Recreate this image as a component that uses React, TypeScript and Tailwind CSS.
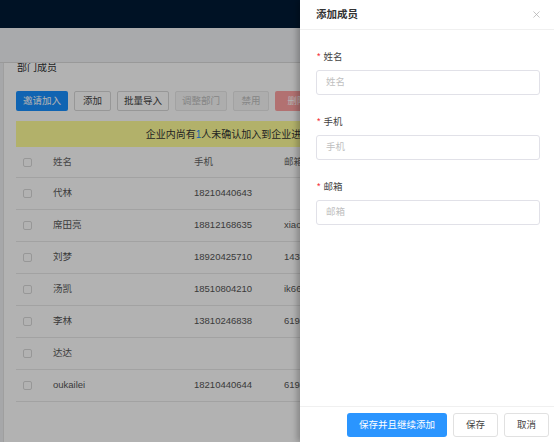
import { X } from "lucide-react";

const members = [
  { name: "代林", phone: "18210440643", email: "" },
  { name: "席田亮", phone: "18812168635", email: "xiaoxi@163.com" },
  { name: "刘梦", phone: "18920425710", email: "1436629870@qq.com" },
  { name: "汤凯", phone: "18510804210", email: "ik666@163.com" },
  { name: "李林", phone: "13810246838", email: "619477850@qq.com" },
  { name: "达达", phone: "", email: "" },
  { name: "oukailei", phone: "18210440644", email: "619423211@qq.com" },
];

const fields = [
  { label: "姓名", placeholder: "姓名" },
  { label: "手机", placeholder: "手机" },
  { label: "邮箱", placeholder: "邮箱" },
];

function Checkbox() {
  return <span className="block w-[9px] h-[9px] border border-[#d9d9d9] rounded-[2px] bg-white" />;
}

export default function App() {
  return (
    <div className="relative w-[554px] h-[442px] overflow-hidden bg-[#eef0f3] font-['Liberation_Sans','Noto_Sans_CJK_SC',sans-serif] text-[9.5px] text-[#555]">
      {/* page behind the drawer */}
      <div className="flex flex-col h-full">
        <div className="h-[28px] shrink-0 bg-[#001a36]" />
        <div className="h-[35px] shrink-0 bg-[#f3f4f6] border-b border-[#dcdcdc]" />
        <div className="flex-1 pl-[3px] overflow-hidden">
          <div className="h-full bg-white border-l border-[#e4e4e4] overflow-hidden">
            <div className="-mt-[2px] pl-[12px]">
              <div className="pl-[1px] text-[10px] text-[#333] leading-[14px]">部门成员</div>
              <div className="flex gap-[6px] mt-[16px]">
                <button className="w-[52px] h-[20px] rounded-[2px] bg-[#1890ff] text-white">邀请加入</button>
                <button className="w-[37px] h-[20px] rounded-[2px] border border-[#d9d9d9] bg-white text-[#444]">添加</button>
                <button className="w-[52px] h-[20px] rounded-[2px] border border-[#d9d9d9] bg-white text-[#444]">批量导入</button>
                <button className="w-[52px] h-[20px] rounded-[2px] border border-[#e8e8e8] bg-[#f8f8f8] text-[#c0c0c0]">调整部门</button>
                <button className="w-[36px] h-[20px] rounded-[2px] border border-[#e8e8e8] bg-[#f8f8f8] text-[#c0c0c0]">禁用</button>
                <button className="w-[44px] h-[20px] rounded-[2px] bg-[#ffa3a3] text-white">删除</button>
              </div>
              <div className="mt-[10px] w-[525px] h-[26px] bg-[#fffe99] flex items-center justify-center text-[#333] text-[10px]">
                企业内尚有<span className="text-[#1890ff]">1</span>人未确认加入到企业进行激活，点击重新邀请吧
              </div>
              <div className="w-[525px]">
                <div className="flex items-center h-[31px] border-b border-[#e8e8e8] text-[#666]">
                  <div className="w-[37px] pl-[7px]"><Checkbox /></div>
                  <div className="w-[141px]">姓名</div>
                  <div className="w-[90px]">手机</div>
                  <div className="flex-1">邮箱</div>
                </div>
                {members.map((m) => (
                  <div key={m.name} className="flex items-center h-[32px] border-b border-[#e8e8e8] text-[#555]">
                    <div className="w-[37px] pl-[7px]"><Checkbox /></div>
                    <div className="w-[141px]">{m.name}</div>
                    <div className="w-[90px]">{m.phone}</div>
                    <div className="flex-1">{m.email}</div>
                  </div>
                ))}
              </div>
            </div>
          </div>
        </div>
      </div>

      {/* mask */}
      <div className="absolute inset-0 bg-black/30" />

      {/* drawer */}
      <div className="absolute top-0 right-0 h-full w-[254px] bg-white flex flex-col shadow-[-3px_0_6px_rgba(0,0,0,0.25)]">
        <div className="h-[30px] shrink-0 flex items-center justify-between pl-[16px] pr-[12px] border-b border-[#f0f0f0]">
          <span className="text-[10.5px] font-bold text-[#333]">添加成员</span>
          <X size={11} strokeWidth={1.5} className="text-[#aaa]" />
        </div>
        <div className="flex-1 px-[16px] pt-[20px] pr-[14px]">
          {fields.map((f) => (
            <div key={f.label} className="mb-[20px]">
              <div className="flex items-center h-[14px] text-[#444]">
                <span className="text-[#f5222d] text-[9px] mr-[3px] ml-[1px]">*</span>
                {f.label}
              </div>
              <div className="mt-[6px] h-[25px] border border-[#e1e1e8] rounded-[3px] flex items-center px-[9px] text-[#bfbfbf]">
                {f.placeholder}
              </div>
            </div>
          ))}
        </div>
        <div className="h-[36px] shrink-0 border-t border-[#f0f0f0] flex items-center justify-end gap-[6px] pr-[5px] pt-[1px]">
          <button className="w-[100px] h-[24px] rounded-[3px] bg-[#2a95ff] text-white">保存并且继续添加</button>
          <button className="w-[45px] h-[24px] rounded-[3px] border border-[#e1e1e1] text-[#444]">保存</button>
          <button className="w-[45px] h-[24px] rounded-[3px] border border-[#e1e1e1] text-[#444]">取消</button>
        </div>
      </div>
    </div>
  );
}
